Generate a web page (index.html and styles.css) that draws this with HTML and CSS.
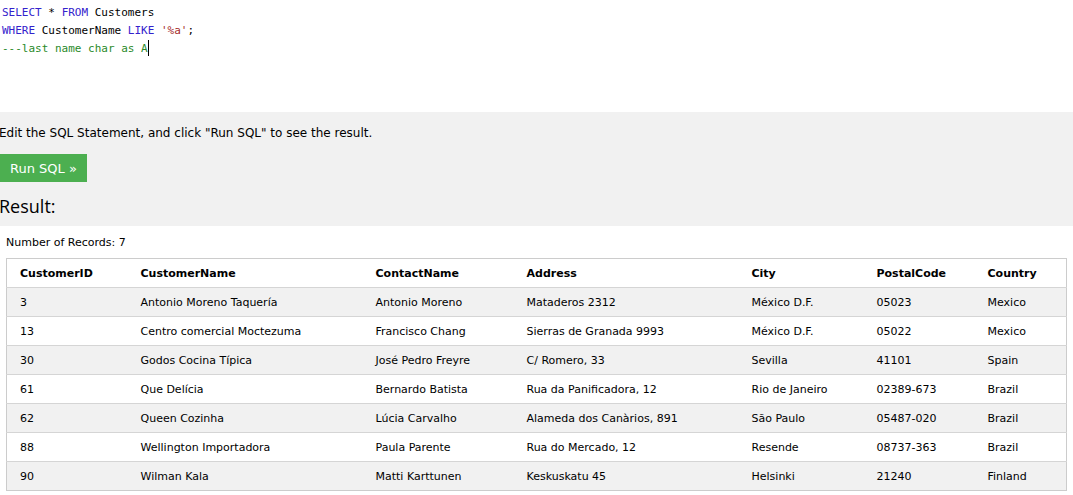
FILE: index.html
```html
<!DOCTYPE html>
<html>
<head>
<meta charset="utf-8">
<link rel="stylesheet" href="styles.css">
</head>
<body>
<div class="editor">
  <div class="code-line"><span class="kw">SELECT</span> * <span class="kw">FROM</span> Customers</div>
  <div class="code-line"><span class="kw">WHERE</span> CustomerName <span class="kw">LIKE</span> <span class="str">'%a'</span>;</div>
  <div class="code-line"><span class="cm">---last name char as A</span><span class="cursor"></span></div>
</div>
<div class="panel">
  <div class="hint">Edit the SQL Statement, and click "Run SQL" to see the result.</div>
  <button class="run-btn">Run SQL »</button>
  <h2 class="result-title">Result:</h2>
</div>
<div class="results">
  <div class="count">Number of Records: 7</div>
  <table class="grid">
    <colgroup>
      <col class="c1"><col class="c2"><col class="c3"><col class="c4"><col class="c5"><col class="c6"><col class="c7">
    </colgroup>
    <thead>
      <tr><th>CustomerID</th><th>CustomerName</th><th>ContactName</th><th>Address</th><th>City</th><th>PostalCode</th><th>Country</th></tr>
    </thead>
    <tbody>
      <tr><td>3</td><td>Antonio Moreno Taquería</td><td>Antonio Moreno</td><td>Mataderos 2312</td><td>México D.F.</td><td>05023</td><td>Mexico</td></tr>
      <tr><td>13</td><td>Centro comercial Moctezuma</td><td>Francisco Chang</td><td>Sierras de Granada 9993</td><td>México D.F.</td><td>05022</td><td>Mexico</td></tr>
      <tr><td>30</td><td>Godos Cocina Típica</td><td>José Pedro Freyre</td><td>C/ Romero, 33</td><td>Sevilla</td><td>41101</td><td>Spain</td></tr>
      <tr><td>61</td><td>Que Delícia</td><td>Bernardo Batista</td><td>Rua da Panificadora, 12</td><td>Rio de Janeiro</td><td>02389-673</td><td>Brazil</td></tr>
      <tr><td>62</td><td>Queen Cozinha</td><td>Lúcia Carvalho</td><td>Alameda dos Canàrios, 891</td><td>São Paulo</td><td>05487-020</td><td>Brazil</td></tr>
      <tr><td>88</td><td>Wellington Importadora</td><td>Paula Parente</td><td>Rua do Mercado, 12</td><td>Resende</td><td>08737-363</td><td>Brazil</td></tr>
      <tr><td>90</td><td>Wilman Kala</td><td>Matti Karttunen</td><td>Keskuskatu 45</td><td>Helsinki</td><td>21240</td><td>Finland</td></tr>
    </tbody>
  </table>
</div>
</body>
</html>
```

FILE: styles.css
```css
html, body {
  margin: 0;
  padding: 0;
  background: #fff;
  color: #000;
  font-family: "DejaVu Sans", Verdana, sans-serif;
}

.editor {
  height: 112px;
  box-sizing: border-box;
  padding: 4px 0 0 2px;
  font-family: "DejaVu Sans Mono", "Liberation Mono", monospace;
  font-size: 11px;
  line-height: 18px;
  color: #000;
}

.code-line {
  white-space: pre;
  height: 18px;
}

.kw { color: #3322cc; }
.str { color: #a52a2a; }
.cm { color: #2a8a2a; }

.cursor {
  display: inline-block;
  width: 1px;
  height: 16px;
  background: #000;
  vertical-align: -4px;
}

.panel {
  background: #f1f1f1;
  height: 114px;
  box-sizing: border-box;
  padding-top: 13px;
}

.hint {
  font-size: 12px;
  line-height: 16px;
  height: 16px;
  margin-left: -1px;
}

.run-btn {
  display: block;
  margin-top: 13px;
  width: 87px;
  height: 28px;
  border: none;
  background: #4caf50;
  color: #fff;
  font-family: "DejaVu Sans", Verdana, sans-serif;
  font-size: 13px;
  padding: 0;
  text-align: center;
}

.result-title {
  margin: 12px 0 0 -1px;
  font-family: "Open Sans", "Noto Sans", sans-serif;
  font-weight: normal;
  font-size: 18px;
  line-height: 24px;
}

.results {
  padding: 9px 6px 0 6px;
}

.count {
  font-size: 11px;
  line-height: 16px;
  margin-bottom: 7px;
}

.grid {
  width: 1061px;
  border-collapse: collapse;
  border: 1px solid #cccccc;
  font-size: 11px;
  table-layout: fixed;
}

.grid col.c1 { width: 121px; }
.grid col.c2 { width: 235px; }
.grid col.c3 { width: 151px; }
.grid col.c4 { width: 225px; }
.grid col.c5 { width: 125px; }
.grid col.c6 { width: 111px; }
.grid col.c7 { width: auto; }

.grid th, .grid td {
  text-align: left;
  height: 28px;
  padding: 0 0 0 13px;
  white-space: nowrap;
}

.grid th {
  font-weight: bold;
}

.grid tbody tr {
  border-top: 1px solid #d5d5d5;
}

.grid tbody tr:nth-child(odd) {
  background: #f1f1f1;
}
```
